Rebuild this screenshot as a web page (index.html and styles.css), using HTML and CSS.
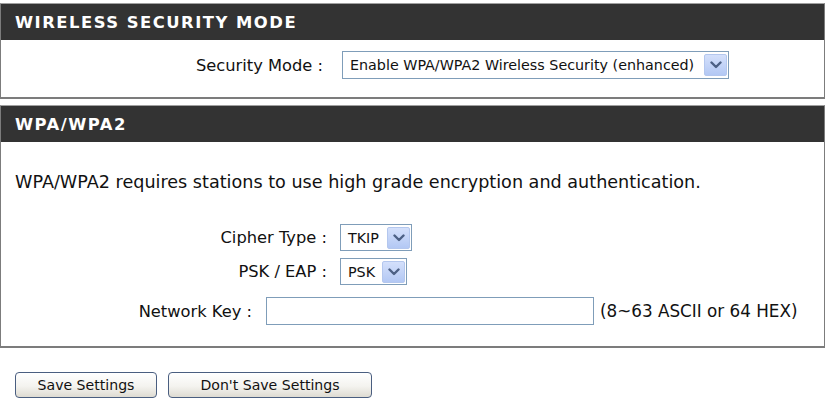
FILE: index.html
```html
<!DOCTYPE html>
<html>
<head>
<meta charset="utf-8">
<title>Wireless Security</title>
<link rel="stylesheet" href="styles.css">
</head>
<body>
<div class="page">
  <div class="box">
    <h2 class="box-title">WIRELESS SECURITY MODE</h2>
    <div class="box-body mode-body">
      <div class="row">
        <span class="label label-mode">Security Mode :</span>
        <div class="select select-mode">
          <span class="select-text">Enable WPA/WPA2 Wireless Security (enhanced)</span>
          <span class="select-btn"><svg width="12" height="8" viewBox="0 0 12 8"><path d="M1.5 1.5 L6 6 L10.5 1.5" fill="none" stroke="#4d6185" stroke-width="2.4" stroke-linecap="round" stroke-linejoin="round"/></svg></span>
        </div>
      </div>
    </div>
  </div>

  <div class="box">
    <h2 class="box-title">WPA/WPA2</h2>
    <div class="box-body wpa-body">
      <p class="intro">WPA/WPA2 requires stations to use high grade encryption and authentication.</p>
      <div class="row row-cipher">
        <span class="label label-cipher">Cipher Type :</span>
        <div class="select select-cipher">
          <span class="select-text">TKIP</span>
          <span class="select-btn"><svg width="12" height="8" viewBox="0 0 12 8"><path d="M1.5 1.5 L6 6 L10.5 1.5" fill="none" stroke="#4d6185" stroke-width="2.4" stroke-linecap="round" stroke-linejoin="round"/></svg></span>
        </div>
      </div>
      <div class="row row-psk">
        <span class="label label-cipher">PSK / EAP :</span>
        <div class="select select-psk">
          <span class="select-text">PSK</span>
          <span class="select-btn"><svg width="12" height="8" viewBox="0 0 12 8"><path d="M1.5 1.5 L6 6 L10.5 1.5" fill="none" stroke="#4d6185" stroke-width="2.4" stroke-linecap="round" stroke-linejoin="round"/></svg></span>
        </div>
      </div>
      <div class="row row-key">
        <span class="label label-key">Network Key :</span>
        <input class="text-input" type="text" value="">
        <span class="hint">(8~63 ASCII or 64 HEX)</span>
      </div>
    </div>
  </div>

  <div class="actions">
    <button class="btn btn-save" type="button">Save Settings</button>
    <button class="btn btn-nosave" type="button">Don't Save Settings</button>
  </div>
</div>
</body>
</html>
```

FILE: styles.css
```css
html, body {
  margin: 0;
  padding: 0;
  background: #ffffff;
}

body {
  font-family: "DejaVu Sans", Verdana, sans-serif;
  color: #111111;
}

.page {
  width: 825px;
  padding-top: 3px;
}

.box {
  border: 1px solid #7c7c7c;
  border-top-color: #a0a0a0;
  border-bottom-width: 2px;
  background: #ffffff;
}

.box + .box {
  margin-top: 6px;
}

.box-title {
  margin: 0;
  height: 36px;
  box-sizing: border-box;
  padding-left: 14px;
  padding-top: 1px;
  display: flex;
  align-items: center;
  background: #333333;
  color: #ffffff;
  font-family: "DejaVu Sans", Verdana, sans-serif;
  font-weight: bold;
  font-size: 16.4px;
  letter-spacing: 1.5px;
}

.box-body {
  box-sizing: border-box;
}

.mode-body {
  height: 57px;
  padding-top: 11px;
}

.wpa-body {
  padding-top: 30px;
  padding-bottom: 21px;
}

.row {
  display: flex;
  align-items: center;
}

.label {
  flex: none;
  text-align: right;
  white-space: nowrap;
  font-size: 16.3px;
}

.label-mode {
  width: 322px;
  margin-right: 19px;
}

.label-cipher {
  width: 326px;
  margin-right: 13px;
}

.label-key {
  width: 251px;
  margin-right: 14px;
}

.intro {
  margin: 0;
  padding-left: 14px;
  font-size: 17.6px;
  line-height: 20px;
}

.row-cipher {
  margin-top: 32px;
}

.row-psk {
  margin-top: 7px;
}

.row-key {
  margin-top: 12px;
}

.select {
  flex: none;
  box-sizing: border-box;
  height: 28px;
  border: 1px solid #7f9db9;
  background: #ffffff;
  display: flex;
  align-items: center;
  padding: 0 1px 0 7px;
}

.select-mode {
  width: 387px;
}

.select-cipher {
  width: 72px;
  height: 27px;
}

.select-psk {
  width: 67px;
  height: 27px;
}

.select-text {
  flex: 1;
  white-space: nowrap;
  font-size: 14.3px;
}

.select-btn {
  flex: none;
  width: 23px;
  height: 22px;
  box-sizing: border-box;
  border: 1px solid #b4c7ee;
  border-radius: 2px;
  background: linear-gradient(#d4e0fb, #b3c8f4);
  display: flex;
  align-items: center;
  justify-content: center;
}

.text-input {
  flex: none;
  box-sizing: border-box;
  width: 328px;
  height: 28px;
  margin: 0;
  border: 1px solid #7f9db9;
  background: #ffffff;
  padding: 0 4px;
  font-family: "DejaVu Sans", Verdana, sans-serif;
  font-size: 14px;
}

.hint {
  margin-left: 6px;
  white-space: nowrap;
  font-size: 16.8px;
}

.actions {
  display: flex;
  gap: 11px;
  margin-top: 24px;
  padding-left: 15px;
}

.btn {
  box-sizing: border-box;
  height: 26px;
  margin: 0;
  padding: 0;
  border: 1px solid #4a5e80;
  border-radius: 4px;
  background: linear-gradient(#ffffff, #f4f3ef 55%, #dedbd2);
  color: #111111;
  font-family: "DejaVu Sans", Verdana, sans-serif;
  font-size: 14.1px;
}

.btn-save {
  width: 142px;
}

.btn-nosave {
  width: 204px;
}
```
